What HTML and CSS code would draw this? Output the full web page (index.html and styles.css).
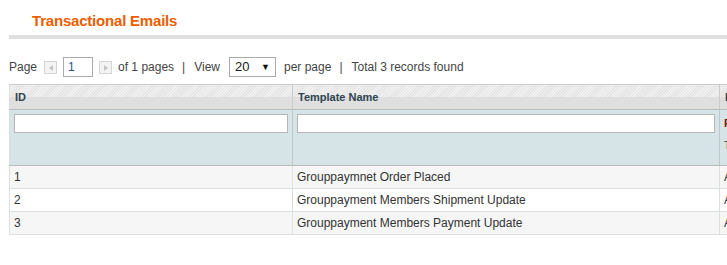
FILE: index.html
```html
<!DOCTYPE html>
<html lang="en">
<head>
    <meta charset="UTF-8">
    <title>Transactional Emails</title>
    <link rel="stylesheet" href="styles.css">
</head>
<body>
    <div class="content-header">
        <h3>Transactional Emails</h3>
    </div>

    <div class="pager">
        <span>Page</span>
        <span class="arrow arrow-prev"></span>
        <input type="text" class="page-input" value="1">
        <span class="arrow arrow-next"></span>
        <span class="of">of 1 pages</span>
        <span class="sep">|</span>
        <span>View</span>
        <span class="limit"><span>20</span><span class="caret">&#9660;</span></span>
        <span>per page</span>
        <span class="sep">|</span>
        <span>Total 3 records found</span>
    </div>

    <div class="grid">
        <table>
            <colgroup>
                <col style="width: 283px">
                <col style="width: 427px">
                <col style="width: 160px">
            </colgroup>
            <thead>
                <tr class="headings">
                    <th>ID</th>
                    <th>Template Name</th>
                    <th>Date Added</th>
                </tr>
                <tr class="filter">
                    <th><input type="text" class="filter-input"></th>
                    <th><input type="text" class="filter-input"></th>
                    <th class="range">
                        <div class="range-line">From:</div>
                        <div class="range-line">To:</div>
                    </th>
                </tr>
            </thead>
            <tbody>
                <tr class="even">
                    <td>1</td>
                    <td>Grouppaymnet Order Placed</td>
                    <td>Aug 12, 2015</td>
                </tr>
                <tr>
                    <td>2</td>
                    <td>Grouppayment Members Shipment Update</td>
                    <td>Aug 12, 2015</td>
                </tr>
                <tr class="even">
                    <td>3</td>
                    <td>Grouppayment Members Payment Update</td>
                    <td>Aug 12, 2015</td>
                </tr>
            </tbody>
        </table>
    </div>
</body>
</html>
```

FILE: styles.css
```css
body {
    margin: 0;
    padding-left: 9px;
    font-family: Arial, "Liberation Sans", sans-serif;
    font-size: 12px;
    color: #444;
    background: #fff;
    overflow: hidden;
}
.content-header {
    padding: 11px 0 4px 23px;
    border-bottom: 4px solid #dfdfdf;
}
.content-header h3 {
    margin: 0;
    font-size: 15px;
    line-height: 20px;
    letter-spacing: -0.2px;
    color: #eb5e00;
}
.pager {
    display: flex;
    align-items: center;
    height: 20px;
    margin-top: 18px;
    line-height: 20px;
    white-space: nowrap;
}
.arrow {
    position: relative;
    width: 11px;
    height: 11px;
    margin: 0 6px 0 7px;
    border: 1px solid #d6d6d6;
    background: #f3f3f3;
}
.arrow::after {
    content: "";
    position: absolute;
    top: 3px;
    left: 3px;
    border: 3px solid transparent;
}
.arrow-prev::after {
    left: 1px;
    border-right: 4px solid #c4c4c4;
}
.arrow-next {
    margin: 0 6px 0 6px;
}
.arrow-next::after {
    left: 4px;
    border-left: 4px solid #c4c4c4;
}
.page-input {
    box-sizing: border-box;
    width: 30px;
    height: 20px;
    margin: 0;
    padding: 0 4px;
    border: 1px solid #aaa;
    font: 12px Arial, "Liberation Sans", sans-serif;
    color: #2a4f8a;
}
.sep {
    margin: 0 9px 0 8px;
}
.limit {
    box-sizing: border-box;
    display: flex;
    justify-content: space-between;
    align-items: center;
    width: 47px;
    height: 20px;
    margin: 0 8px 0 9px;
    padding: 0 5px 0 5px;
    border: 1px solid #aaa;
    color: #222;
    font-size: 13px;
}
.limit .caret {
    font-size: 9px;
    color: #111;
}
.grid {
    margin-top: 7px;
    overflow: hidden;
}
table {
    width: 870px;
    table-layout: fixed;
    border-collapse: collapse;
    border-top: 1px solid #cdcdcd;
    border-left: 1px solid #dadfe0;
}
.headings th {
    height: 24px;
    padding: 0 0 0 5px;
    text-align: left;
    font-size: 11px;
    color: #2d444f;
    border-right: 1px solid #cbcbcb;
    border-bottom: 1px solid #bbb;
    background:
        repeating-linear-gradient(135deg, #f1f1f1 0 1px, #e4e4e4 1px 2px) top / 100% 50% no-repeat,
        #dfdfdf;
}
.filter th {
    height: 51px;
    padding: 4px 4px 0 4px;
    vertical-align: top;
    text-align: left;
    border-right: 1px solid #bcc8ca;
    border-bottom: 1px solid #bbb;
    background: #d7e4e7;
}
.filter-input {
    box-sizing: border-box;
    display: block;
    width: 100%;
    height: 19px;
    margin: 0;
    border: 1px solid #b6b6b6;
    background: #fff;
}
.range {
    font-size: 11px;
    color: #7d1a10;
}
.range-line {
    height: 18px;
    line-height: 18px;
    font-weight: bold;
}
.range-line + .range-line {
    margin-top: 4px;
    color: #444;
    font-weight: normal;
}
td {
    height: 22px;
    padding: 0 4px;
    color: #333;
    border-right: 1px solid #dadfe0;
    border-bottom: 1px solid #dadfe0;
    white-space: nowrap;
}
tr.even td {
    background: #f6f6f6;
}
```
